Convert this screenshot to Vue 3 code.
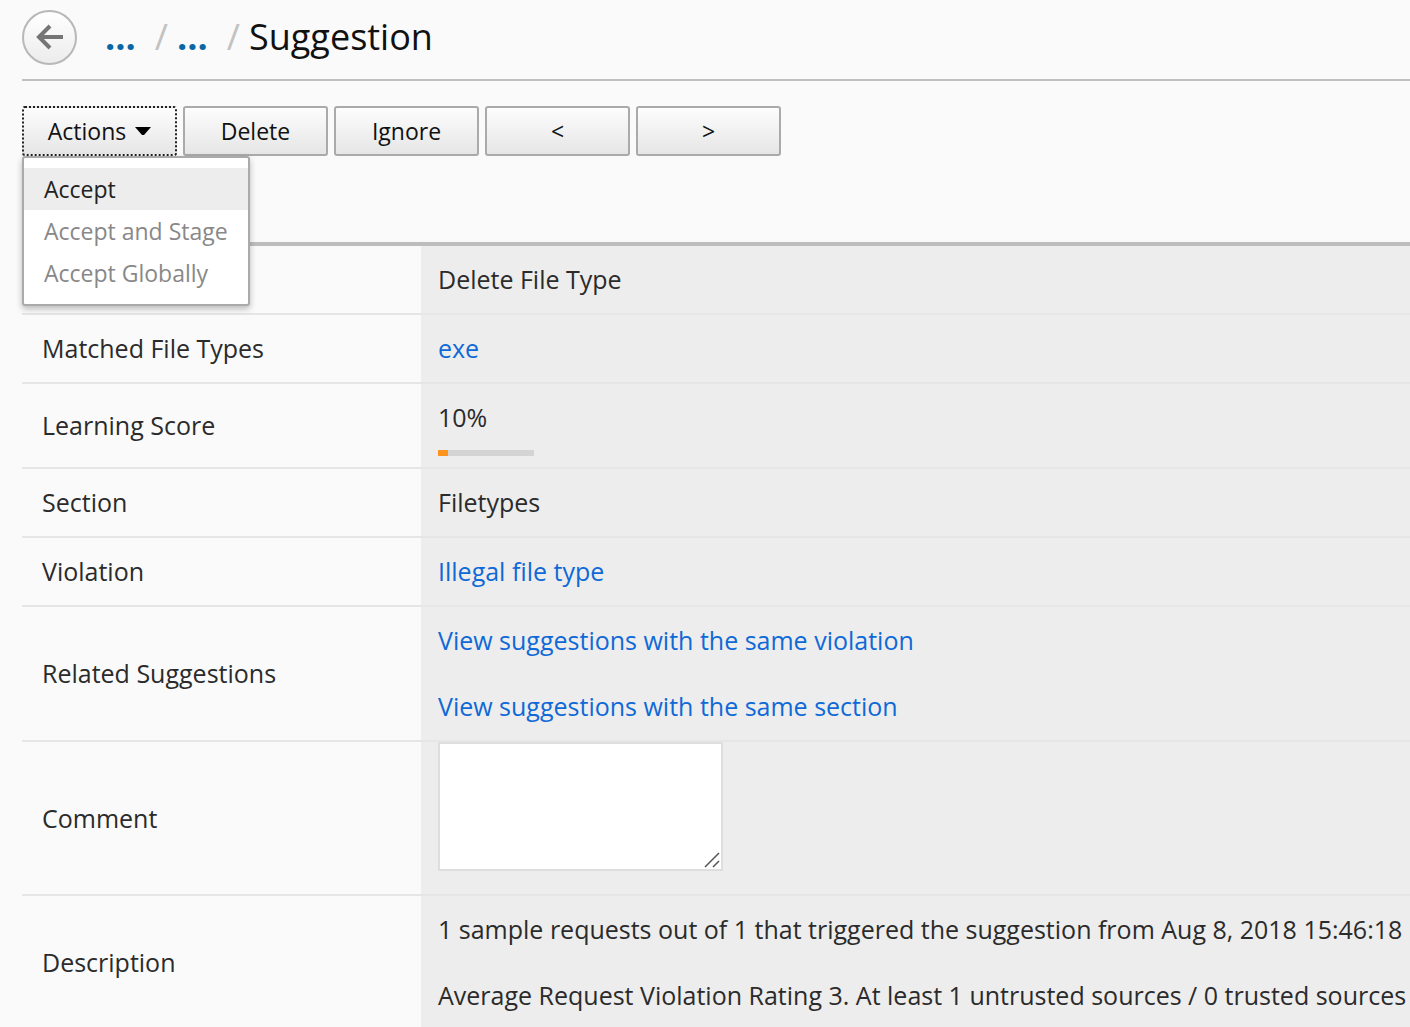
<script setup>
import { ref } from 'vue'

const menuOpen = ref(true)
const comment = ref('')
const score = 10

const actions = [
  { label: 'Accept', enabled: true },
  { label: 'Accept and Stage', enabled: false },
  { label: 'Accept Globally', enabled: false }
]
</script>

<template>
  <main class="page">
    <header class="header">
      <button class="back" type="button" aria-label="Back">
        <svg width="28" height="26" viewBox="0 0 28 26" aria-hidden="true">
          <path d="M14 2 L3 13 L14 24 M3 13 H27" fill="none" stroke="#757575" stroke-width="4" />
        </svg>
      </button>
      <nav class="crumbs" aria-label="Breadcrumb">
        <a href="#">...</a>
        <span class="slash">/</span>
        <a href="#">...</a>
        <span class="slash">/</span>
        <h1>Suggestion</h1>
      </nav>
    </header>

    <div class="toolbar">
      <div class="dropdown">
        <button class="btn actions" type="button" :aria-expanded="menuOpen" @click="menuOpen = !menuOpen">
          Actions
          <svg width="16" height="8" viewBox="0 0 16 8" aria-hidden="true">
            <path d="M0 0 H16 L9 8 H7 Z" fill="#000" />
          </svg>
        </button>
        <div v-if="menuOpen" class="menu" role="menu">
          <button
            v-for="action in actions"
            :key="action.label"
            class="item"
            type="button"
            role="menuitem"
            :disabled="!action.enabled"
          >{{ action.label }}</button>
        </div>
      </div>
      <button class="btn" type="button">Delete</button>
      <button class="btn" type="button">Ignore</button>
      <button class="btn" type="button">&lt;</button>
      <button class="btn" type="button">&gt;</button>
    </div>

    <table class="details">
      <tbody>
        <tr>
          <th></th>
          <td>Delete File Type</td>
        </tr>
        <tr>
          <th scope="row">Matched File Types</th>
          <td><a href="#">exe</a></td>
        </tr>
        <tr>
          <th scope="row">Learning Score</th>
          <td class="score">
            {{ score }}%
            <div class="bar"><div class="fill" :style="{ width: score + '%' }"></div></div>
          </td>
        </tr>
        <tr>
          <th scope="row">Section</th>
          <td>Filetypes</td>
        </tr>
        <tr>
          <th scope="row">Violation</th>
          <td><a href="#">Illegal file type</a></td>
        </tr>
        <tr>
          <th scope="row">Related Suggestions</th>
          <td>
            <p><a href="#">View suggestions with the same violation</a></p>
            <p><a href="#">View suggestions with the same section</a></p>
          </td>
        </tr>
        <tr>
          <th scope="row"><label for="comment">Comment</label></th>
          <td class="comment">
            <div class="box">
              <textarea id="comment" v-model="comment"></textarea>
              <svg class="grip" width="16" height="16" viewBox="0 0 16 16" aria-hidden="true">
                <path d="M1 15 L15 1 M9 15 L15 9" fill="none" stroke="#555" stroke-width="1.500" />
              </svg>
            </div>
          </td>
        </tr>
        <tr>
          <th scope="row">Description</th>
          <td>
            <p>1 sample requests out of 1 that triggered the suggestion from Aug 8, 2018 15:46:18 u</p>
            <p>Average Request Violation Rating 3. At least 1 untrusted sources / 0 trusted sources</p>
          </td>
        </tr>
      </tbody>
    </table>
  </main>
</template>

<style>
body {
  margin: 0;
  background: #fafafa;
}
</style>

<style scoped>
.page {
  overflow-x: clip;
  padding-left: 22px;
  color: #2b2b2b;
  font-family: "Open Sans", "Noto Sans", sans-serif;
  font-size: 25px;
  line-height: 33px;
}

a {
  color: #0f69d7;
  text-decoration: none;
}

.header {
  display: flex;
  align-items: center;
  gap: 28px;
  height: 81px;
  padding-bottom: 5px;
  box-sizing: border-box;
  border-bottom: 2px solid #c0c0c0;
}

.back {
  display: flex;
  align-items: center;
  justify-content: center;
  width: 55px;
  height: 55px;
  padding: 0;
  border: 2px solid #b8b8b8;
  border-radius: 50%;
  background: linear-gradient(#fff, #ececec);
}

.crumbs {
  display: flex;
  align-items: center;
  font-size: 36px;
  line-height: 48px;
}

.crumbs a {
  color: #0b66a5;
  font-weight: 700;
}

.slash {
  margin: 0 9px 0 19px;
  color: #c2c2c2;
}

.crumbs h1 {
  margin: 0;
  color: #111;
  font-size: 36px;
  font-weight: 400;
}

.toolbar {
  display: flex;
  gap: 6px;
  margin: 25px 0 86px;
}

.dropdown {
  position: relative;
}

.btn {
  display: flex;
  align-items: center;
  justify-content: center;
  gap: 9px;
  width: 145px;
  height: 50px;
  padding: 0;
  border: 2px solid #aaa;
  border-radius: 3px;
  background: linear-gradient(#fdfdfd, #e6e6e6);
  color: #111;
  font-family: inherit;
  font-size: 23px;
  line-height: 32px;
}

.actions {
  width: 155px;
  border: 2px dotted #222;
}

.menu {
  position: absolute;
  top: 50px;
  left: 0;
  z-index: 1;
  width: 228px;
  box-sizing: border-box;
  padding: 10px 0;
  border: 2px solid #aaa;
  border-radius: 3px;
  background: #fff;
  box-shadow: 0 3px 6px rgba(0, 0, 0, 0.25);
}

.item {
  display: block;
  width: 100%;
  height: 42px;
  padding: 0 20px;
  border: 0;
  background: #ededed;
  color: #222;
  font-family: inherit;
  font-size: 23px;
  line-height: 32px;
  text-align: left;
  white-space: nowrap;
}

.item:disabled {
  background: #fff;
  color: #888;
}

.details {
  width: 100%;
  table-layout: fixed;
  border-collapse: separate;
  border-spacing: 0;
  border-top: 4px solid #bdbdbd;
}

.details th,
.details td {
  border-bottom: 2px solid #e6e6e6;
  font-weight: 400;
  text-align: left;
  vertical-align: middle;
  white-space: nowrap;
}

.details th {
  width: 379px;
  padding: 17px 0 17px 20px;
}

.details td {
  padding: 17px 0 17px 17px;
  background: #ededed;
}

.details p {
  margin: 0;
}

.details p + p {
  margin-top: 33px;
}

.details .score {
  padding-bottom: 11px;
}

.bar {
  width: 96px;
  height: 6px;
  margin-top: 16px;
  background: #d4d4d4;
}

.fill {
  height: 100%;
  background: #ff9320;
}

.details .comment {
  padding-top: 0;
  padding-bottom: 23px;
}

.box {
  position: relative;
  width: 285px;
}

.box textarea {
  display: block;
  width: 100%;
  height: 129px;
  box-sizing: border-box;
  padding: 4px;
  border: 2px solid #dedede;
  background: #fff;
  font: inherit;
  resize: none;
}

.grip {
  position: absolute;
  right: 3px;
  bottom: 3px;
}
</style>
